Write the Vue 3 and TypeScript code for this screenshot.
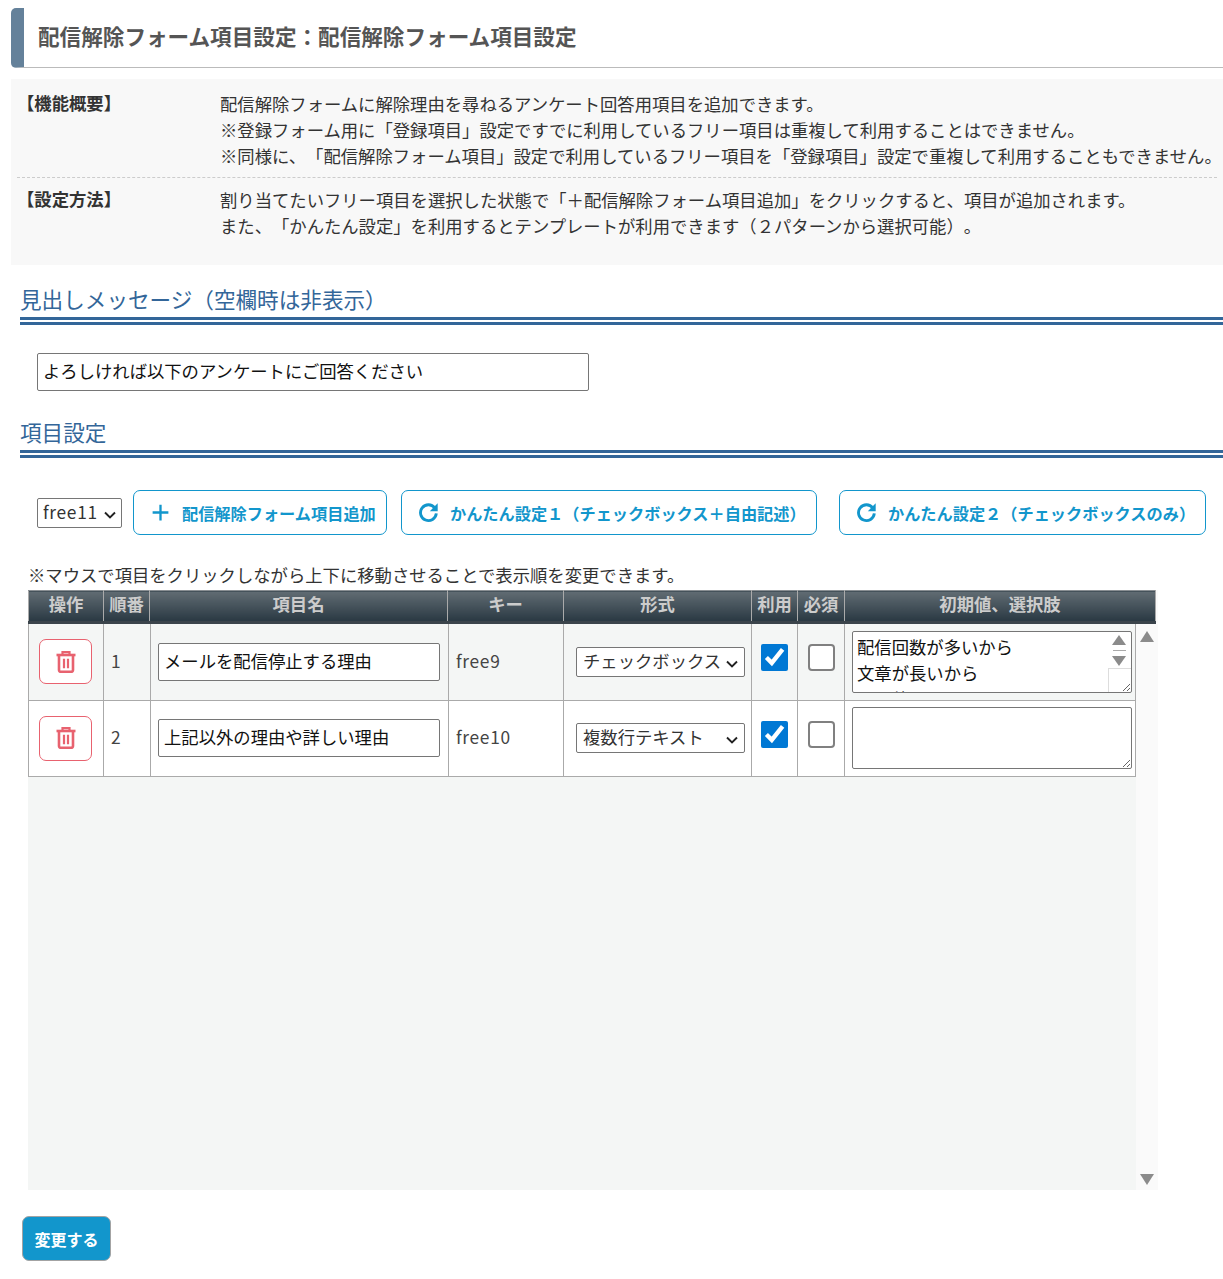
<script setup lang="ts">
interface Row {
  no: number
  name: string
  key: string
  format: string
  options: string
  scroll: boolean
}
const rows: Row[] = [
  { no: 1, name: 'メールを配信停止する理由', key: 'free9', format: 'チェックボックス', options: '配信回数が多いから\n文章が長いから\nその他', scroll: true },
  { no: 2, name: '上記以外の理由や詳しい理由', key: 'free10', format: '複数行テキスト', options: '', scroll: false },
]
const headers = ['操作', '順番', '項目名', 'キー', '形式', '利用', '必須', '初期値、選択肢']
const headWidths = [75, 46, 298, 116, 188, 46, 47, 311]
const bodyWidths = [75, 47, 298, 115, 188, 46, 47, 291]
</script>

<template>
  <main class="page">
    <header class="title-bar">
      <h1>配信解除フォーム項目設定：配信解除フォーム項目設定</h1>
    </header>

    <section class="info">
      <div class="info-row first">
        <div class="info-label">【機能概要】</div>
        <div class="info-text">
          <p>配信解除フォームに解除理由を尋ねるアンケート回答用項目を追加できます。</p>
          <p>※登録フォーム用に「登録項目」設定ですでに利用しているフリー項目は重複して利用することはできません。</p>
          <p>※同様に、「配信解除フォーム項目」設定で利用しているフリー項目を「登録項目」設定で重複して利用することもできません。</p>
        </div>
      </div>
      <div class="info-row">
        <div class="info-label">【設定方法】</div>
        <div class="info-text">
          <p>割り当てたいフリー項目を選択した状態で「＋配信解除フォーム項目追加」をクリックすると、項目が追加されます。</p>
          <p>また、「かんたん設定」を利用するとテンプレートが利用できます（２パターンから選択可能）。</p>
        </div>
      </div>
    </section>

    <h2 class="section first-section">見出しメッセージ（空欄時は非表示）</h2>
    <div class="message">
      <input class="text-input message-input" type="text" value="よろしければ以下のアンケートにご回答ください" />
    </div>

    <h2 class="section second-section">項目設定</h2>

    <div class="toolbar">
      <select class="free-select">
        <option>free11</option>
      </select>
      <button class="tool-btn add" type="button">
        <svg class="tool-icon" viewBox="0 0 20 20" aria-hidden="true">
          <path d="M10 2.5v15M2.5 10h15" fill="none" stroke="currentColor" stroke-width="2.2" />
        </svg>
        配信解除フォーム項目追加
      </button>
      <button class="tool-btn easy1" type="button">
        <svg class="tool-icon" viewBox="0 0 22 22" aria-hidden="true">
          <path d="M17.6 6.2A8.3 8.3 0 1 0 19.2 12" fill="none" stroke="currentColor" stroke-width="3" />
          <path d="M20.6 1.4v8.2h-8.2z" fill="currentColor" />
        </svg>
        かんたん設定１（チェックボックス＋自由記述）
      </button>
      <button class="tool-btn easy2" type="button">
        <svg class="tool-icon" viewBox="0 0 22 22" aria-hidden="true">
          <path d="M17.6 6.2A8.3 8.3 0 1 0 19.2 12" fill="none" stroke="currentColor" stroke-width="3" />
          <path d="M20.6 1.4v8.2h-8.2z" fill="currentColor" />
        </svg>
        かんたん設定２（チェックボックスのみ）
      </button>
    </div>

    <p class="note">※マウスで項目をクリックしながら上下に移動させることで表示順を変更できます。</p>

    <div class="table-wrap">
      <table class="head-table">
        <colgroup>
          <col v-for="(w, i) in headWidths" :key="i" :style="{ width: w + 'px' }" />
        </colgroup>
        <thead>
          <tr>
            <th v-for="h in headers" :key="h">{{ h }}</th>
          </tr>
        </thead>
      </table>

      <div class="scroll-area">
        <div class="scroll-body">
          <table class="body-table">
            <colgroup>
              <col v-for="(w, i) in bodyWidths" :key="i" :style="{ width: w + 'px' }" />
            </colgroup>
            <tbody>
              <tr v-for="row in rows" :key="row.no">
                <td class="cell-op">
                  <button class="del-btn" type="button" aria-label="削除">
                    <svg viewBox="0 0 20 22" width="20" height="22" aria-hidden="true">
                      <path d="M0.5 4h19" fill="none" stroke="currentColor" stroke-width="2.6" />
                      <path d="M6.5 4V1.2h7V4" fill="none" stroke="currentColor" stroke-width="2.2" />
                      <path d="M3 4.5v14.6a1.7 1.7 0 0 0 1.7 1.7h10.6a1.7 1.7 0 0 0 1.7-1.7V4.5" fill="none" stroke="currentColor" stroke-width="2.6" />
                      <path d="M8 7.8v9.4M12 7.8v9.4" fill="none" stroke="currentColor" stroke-width="2.2" />
                    </svg>
                  </button>
                </td>
                <td class="cell-text">{{ row.no }}</td>
                <td class="cell-name">
                  <input class="text-input name-input" type="text" :value="row.name" />
                </td>
                <td class="cell-text">{{ row.key }}</td>
                <td class="cell-format">
                  <select class="format-select">
                    <option>{{ row.format }}</option>
                  </select>
                </td>
                <td class="cell-check"><input class="check" type="checkbox" checked /></td>
                <td class="cell-check"><input class="check" type="checkbox" /></td>
                <td class="cell-area">
                  <div class="area-box">
                    <textarea class="options" :value="row.options"></textarea>
                    <div v-if="row.scroll" class="mini-scroll" aria-hidden="true">
                      <span class="tri up"></span>
                      <span class="mini-line"></span>
                      <span class="tri down"></span>
                      <span class="mini-corner"></span>
                    </div>
                  </div>
                </td>
              </tr>
            </tbody>
          </table>
        </div>
        <div class="scroll-track" aria-hidden="true">
          <span class="tri up"></span>
          <span class="tri down"></span>
        </div>
      </div>
    </div>

    <button class="submit" type="button">変更する</button>
  </main>
</template>

<style>
html,
body {
  margin: 0;
  background: #fff;
}
</style>

<style scoped>
.page {
  width: 1223px;
  height: 1279px;
  box-sizing: border-box;
  padding-top: 8px;
  font-family: "Noto Sans CJK JP", "Noto Sans", sans-serif;
  font-size: 17.33px;
  line-height: 26px;
  color: #333;
  overflow: hidden;
  text-spacing-trim: space-all;
}
.title-bar {
  margin-left: 11px;
  height: 60px;
  box-sizing: border-box;
  border-left: 13px solid #64819a;
  border-bottom: 1px solid #bbb;
  border-radius: 5px 0 0 5px;
  display: flex;
  align-items: center;
  padding: 0 0 4px 14px;
}
.title-bar h1 {
  margin: 0;
  font-size: 21.6px;
  font-weight: 700;
  color: #555;
  line-height: 30px;
}
.info {
  margin: 11px 0 0 11px;
  height: 186px;
  box-sizing: border-box;
  background: #f8f8f8;
  padding: 12px 6px 0;
}
.info-row {
  display: flex;
  height: 86px;
}
.info-row.first {
  border-bottom: 1px dashed #ccc;
  margin-bottom: 9px;
}
.info-label {
  width: 203px;
  flex: none;
  font-weight: 700;
  margin: -1px 0 0 0;
}
.info-text {
  white-space: nowrap;
}
.info-text p {
  margin: 0;
}
.section {
  margin: 0 0 0 20px;
  font-size: 21.6px;
  font-weight: 400;
  line-height: 30px;
  padding-bottom: 3px;
  color: #336699;
  border-bottom: 8px double #336699;
}
.first-section {
  margin-top: 19px;
}
.second-section {
  margin-top: 26px;
}
.message {
  padding: 28px 0 0 37px;
}
.text-input {
  box-sizing: border-box;
  height: 38px;
  border: 1px solid #767676;
  border-radius: 2px;
  background: #fff;
  padding: 0 5px 3px;
  font: inherit;
  color: #111;
  outline: none;
  text-spacing-trim: space-all;
}
.message-input {
  display: block;
  width: 552px;
}
.toolbar {
  display: flex;
  align-items: center;
  margin: 32px 0 0 37px;
}
.free-select,
.format-select {
  appearance: none;
  height: 30px;
  box-sizing: border-box;
  border: 1px solid #767676;
  border-radius: 2px;
  background: #fff url("data:image/svg+xml,%3Csvg xmlns='http://www.w3.org/2000/svg' width='12' height='8' viewBox='0 0 12 8'%3E%3Cpath d='M1 1.5l5 5 5-5' fill='none' stroke='%23222' stroke-width='1.9'/%3E%3C/svg%3E") no-repeat;
  font: inherit;
  color: #333;
  outline: none;
}
.free-select {
  width: 85px;
  padding: 0 0 2px 5px;
  letter-spacing: 0.7px;
  background-position: right 5px top 12px;
}
.format-select {
  display: block;
  width: 169px;
  padding: 0 0 2px 6px;
  background-position: right 6px top 12px;
}
.tool-btn {
  display: flex;
  align-items: center;
  justify-content: flex-start;
  height: 45px;
  box-sizing: border-box;
  border: 1px solid #1296cc;
  border-radius: 7px;
  background: #fff;
  color: #1296cc;
  font-family: inherit;
  font-size: 16.2px;
  font-weight: 700;
  white-space: nowrap;
  padding: 0 0 0 16px;
  text-spacing-trim: space-all;
}
.tool-icon {
  width: 21px;
  height: 21px;
  flex: none;
  margin-right: 11px;
}
.add {
  width: 254px;
  margin-left: 11px;
}
.easy1 {
  width: 416px;
  margin-left: 14px;
}
.easy2 {
  width: 367px;
  margin-left: 22px;
}
.note {
  margin: 27px 0 0 28px;
  line-height: 26px;
  height: 28px;
}
.table-wrap {
  margin-left: 28px;
  width: 1130px;
  background: linear-gradient(#fafafa, #fafafa) no-repeat right top / 4px 33px;
}
.head-table,
.body-table {
  border-collapse: collapse;
  table-layout: fixed;
}
.head-table {
  width: 1127px;
}
.body-table {
  width: 1107px;
}
.head-table th {
  height: 30px;
  padding: 0;
  background: linear-gradient(#616c73, #293842);
  border: 1px solid #aaa;
  border-top-color: #8a8f93;
  border-bottom: 3px solid #3b444b;
  color: #ccc;
  font-size: 17.33px;
  font-weight: 700;
  line-height: 26px;
  text-align: center;
  vertical-align: top;
  overflow: hidden;
  text-spacing-trim: space-all;
}
.scroll-area {
  display: flex;
  height: 566px;
}
.scroll-body {
  width: 1108px;
  background: #f4f6f5;
  flex: none;
}
.body-table td {
  border: 1px solid #aaa;
  padding: 0;
  height: 76px;
  vertical-align: middle;
  box-sizing: border-box;
}
.body-table tr:first-child td {
  border-top: none;
}
.body-table tr:last-child td {
  background: #fff;
}
.cell-op {
  text-align: center;
}
.del-btn {
  display: inline-flex;
  align-items: center;
  justify-content: center;
  width: 53px;
  height: 45px;
  margin: 0 1px 0 0;
  padding: 0;
  vertical-align: middle;
  background: #fff;
  border: 1px solid #e8626f;
  border-radius: 7px;
  color: #e8626f;
}
.cell-text {
  padding: 0 0 2px 7px !important;
  letter-spacing: 0.7px;
  color: #444;
}
.cell-name {
  padding-left: 7px !important;
}
.name-input {
  display: block;
  width: 282px;
}
.cell-format {
  padding-left: 12px !important;
}
.cell-check {
  text-align: center;
}
.check {
  display: block;
  width: 27px;
  height: 27px;
  margin: 0 auto 8px;
  accent-color: #0078d4;
}
.check:not(:checked) {
  appearance: none;
  box-sizing: border-box;
  background: #fff;
  border: 2px solid #808080;
  border-radius: 4px;
}
.cell-area {
  padding-left: 7px !important;
}
.area-box {
  position: relative;
  width: 280px;
  height: 62px;
}
.options {
  display: block;
  box-sizing: border-box;
  width: 280px;
  height: 62px;
  border: 1px solid #767676;
  border-radius: 2px;
  background: #fff;
  padding: 2px 4px;
  font: inherit;
  line-height: 26px;
  color: #111;
  overflow: hidden;
  outline: none;
  resize: both;
}
.mini-scroll {
  position: absolute;
  top: 1px;
  right: 1px;
  bottom: 1px;
  width: 23px;
  pointer-events: none;
}
.mini-line {
  position: absolute;
  top: 18px;
  left: 5px;
  width: 13px;
  height: 1px;
  background: #aaa;
}
.mini-corner {
  position: absolute;
  left: 0;
  right: 0;
  bottom: 0;
  height: 23px;
  border: solid #ddd;
  border-width: 1px 0 0 1px;
}
.mini-scroll .tri {
  position: absolute;
  left: 4px;
  border-left: 7px solid transparent;
  border-right: 7px solid transparent;
}
.mini-scroll .tri.up {
  top: 3px;
  border-bottom: 10px solid #8b8b8b;
}
.mini-scroll .tri.down {
  top: 24px;
  border-top: 10px solid #8b8b8b;
}
.scroll-track {
  position: relative;
  width: 22px;
  flex: none;
  background: #fafafa;
}
.scroll-track .tri {
  position: absolute;
  left: 4px;
  border-left: 7.5px solid transparent;
  border-right: 7.5px solid transparent;
}
.scroll-track .tri.up {
  top: 7px;
  border-bottom: 11px solid #8b8b8b;
}
.scroll-track .tri.down {
  bottom: 5px;
  border-top: 11px solid #8b8b8b;
}
.submit {
  display: block;
  margin: 26px 0 0 22px;
  width: 89px;
  height: 45px;
  box-sizing: border-box;
  border: 1px solid #a3a3a3;
  border-radius: 7px;
  background: #1296cc;
  color: #fff;
  font-family: inherit;
  font-size: 16px;
  font-weight: 700;
  padding: 0;
}
</style>
